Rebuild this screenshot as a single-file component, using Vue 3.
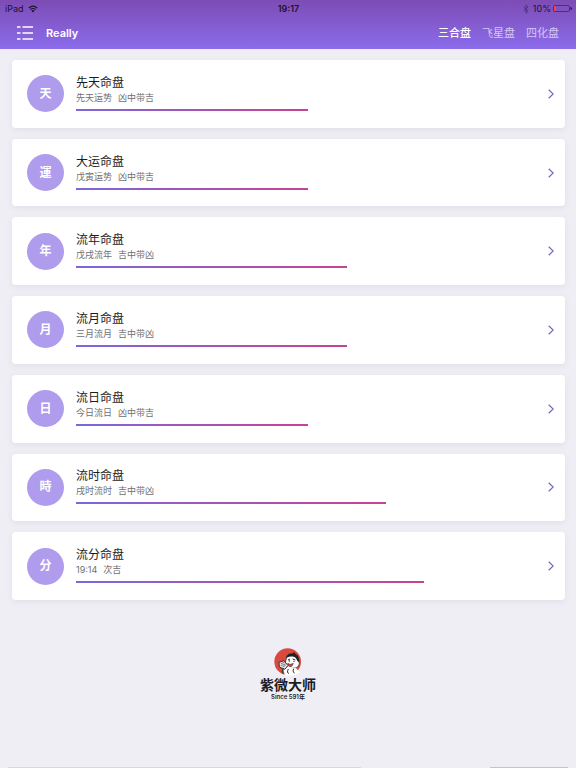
<script setup>
import { ref } from 'vue'

const tabs = ['三合盘', '飞星盘', '四化盘']
const active = ref('三合盘')
const charts = [
  { mark: '天', title: '先天命盘', period: '先天运势', luck: '凶中带吉', score: 60 },
  { mark: '運', title: '大运命盘', period: '戊寅运势', luck: '凶中带吉', score: 60 },
  { mark: '年', title: '流年命盘', period: '戊戌流年', luck: '吉中带凶', score: 70 },
  { mark: '月', title: '流月命盘', period: '三月流月', luck: '吉中带凶', score: 70 },
  { mark: '日', title: '流日命盘', period: '今日流日', luck: '凶中带吉', score: 60 },
  { mark: '時', title: '流时命盘', period: '戌时流时', luck: '吉中带凶', score: 80 },
  { mark: '分', title: '流分命盘', period: '19:14', luck: '次吉', score: 90 }
]
</script>

<template>
  <div class="page">
    <header class="top">
      <div class="status">
        <div class="status-left">
          <span>iPad</span>
          <svg class="wifi" viewBox="0 0 20 16" aria-hidden="true">
            <path d="M1.5 6Q10-1.4 18.5 6M4.6 9.4Q10 4.6 15.4 9.4" fill="none" stroke="#1d1333" stroke-width="2.2" />
            <path d="M6.8 11.6Q10 8.8 13.2 11.6L10 15Z" fill="#1d1333" />
          </svg>
        </div>
        <span class="clock">19:17</span>
        <div class="status-right">
          <svg class="bluetooth" viewBox="0 0 10 16" aria-hidden="true">
            <path d="M1 4.5L8.5 11.5L5 15V1L8.5 4.5L1 11.5" fill="none" stroke="#4a2f80" stroke-width="1.5" />
          </svg>
          <span>10%</span>
          <svg class="battery" viewBox="0 0 19 9" aria-hidden="true">
            <rect x="0.5" y="1.5" width="16" height="6" rx="1.5" fill="none" stroke="#4a2f80" />
            <rect x="1" y="2" width="2" height="5" fill="#f0434b" />
            <path d="M17.5 3Q19 3.2 19 4.5T17.5 6Z" fill="#1d1333" />
          </svg>
        </div>
      </div>
      <div class="bar">
        <button class="menu" type="button" aria-label="菜单">
          <svg viewBox="0 0 16 14" aria-hidden="true">
            <path d="M0 1H3.5M5.5 1H16M0 7H3.5M5.5 7H16M0 13H3.5M5.5 13H16" stroke="#fff" stroke-width="1.3" />
          </svg>
        </button>
        <h1>Really</h1>
        <nav>
          <button
            v-for="tab in tabs"
            :key="tab"
            type="button"
            class="tab"
            :class="{ active: tab === active }"
            @click="active = tab"
          >{{ tab }}</button>
        </nav>
      </div>
    </header>

    <main>
      <div class="list">
        <a v-for="c in charts" :key="c.title" class="card" href="#">
          <span class="mark">{{ c.mark }}</span>
          <div class="body">
            <h2>{{ c.title }}</h2>
            <p><span>{{ c.period }}</span><span>{{ c.luck }}</span></p>
            <div class="track"><div class="fill" :style="{ width: c.score + '%' }"></div></div>
          </div>
          <svg class="chevron" viewBox="0 0 6 10" aria-hidden="true">
            <path d="M0.7 0.7L5.2 5L0.7 9.3" fill="none" stroke="#7767bd" stroke-width="1.2" />
          </svg>
        </a>
      </div>
    </main>

    <footer class="brand">
      <svg class="portrait" viewBox="0 0 84 84" aria-hidden="true">
        <circle cx="41" cy="41" r="40" fill="#d8493f" />
        <path d="M37 32C37 18 51 13 63 20C70 25 72 36 76 45C75 56 68 61 58 60C45 62 34 55 34 44Z" fill="#fff" stroke="#222" stroke-width="2" />
        <path d="M36 31C37 20 46 15 55 17C56 11 65 13 64 18C73 20 76 32 76 42L70 39C68 33 65 29 61 27C52 24 43 26 36 31Z" fill="#242124" />
        <path d="M42 36L48 33M56 33L64 36" stroke="#222" stroke-width="3" />
        <circle cx="46" cy="39" r="2" fill="#222" />
        <circle cx="60" cy="40" r="2" fill="#222" />
        <path d="M41 46Q49 52 58 46Q55 57 48 56Q41 55 41 46Z" fill="#d8493f" stroke="#222" stroke-width="1.5" />
        <path d="M28 61L43 56L67 61L77 74Q57 87 32 82Z" fill="#fff" />
        <path d="M15 43L30 38L42 53L32 64L16 57Z" fill="#e8e5e5" stroke="#333" stroke-width="3" />
        <path d="M21 47L32 43M20 53L34 48M26 57L35 52" stroke="#444" stroke-width="2" />
        <path d="M29 61Q20 69 28 78M43 63Q37 76 45 76M59 62Q54 69 61 76" fill="none" stroke="#333" stroke-width="3" />
      </svg>
      <strong>紫微大师</strong>
      <small>Since 591年</small>
    </footer>
    <div class="edge"></div>
  </div>
</template>

<style>
body {
  margin: 0;
  background: #efeef5;
}
</style>

<style scoped>
.page {
  box-sizing: border-box;
  min-height: 100vh;
  display: flex;
  flex-direction: column;
  background: #efeef5;
  color: #1c1c1e;
  font-family: Inter, "Noto Sans CJK SC", sans-serif;
}
button {
  padding: 0;
  border: 0;
  background: none;
  font: inherit;
  color: inherit;
}
svg {
  display: block;
}
.top {
  background: linear-gradient(#7d4cb4, #8b6ceb);
}
.status {
  display: grid;
  grid-template-columns: 1fr auto 1fr;
  align-items: center;
  height: 17px;
  padding: 0 4px 0 5px;
  font-size: 9px;
  color: #1d1333;
}
.status-left,
.status-right {
  display: flex;
  align-items: center;
  gap: 4px;
}
.status-right {
  justify-content: flex-end;
  gap: 2px;
}
.clock {
  font-weight: 600;
}
.wifi {
  width: 10px;
  height: 8px;
}
.bluetooth {
  width: 6px;
  height: 10px;
  margin-right: 2px;
}
.battery {
  width: 19px;
  height: 9px;
}
.bar {
  display: flex;
  align-items: center;
  height: 32px;
  padding: 0 17px;
  color: #fff;
}
.menu svg {
  width: 16px;
  height: 14px;
}
h1 {
  flex: 1;
  margin: 0 0 0 13px;
  font-size: 11px;
  line-height: 16px;
  font-weight: 600;
}
nav {
  display: flex;
  gap: 11px;
}
.tab {
  font-size: 11px;
  line-height: 16px;
  color: #d6c6f6;
}
.tab.active {
  color: #fff;
  font-weight: 500;
}
.list {
  display: grid;
  grid-auto-rows: 1fr;
  gap: 11px;
  min-height: 540px;
  padding: 11px 11px 0 12px;
}
.card {
  display: flex;
  align-items: center;
  padding: 0 11px 0 15px;
  border-radius: 4px;
  background: #fff;
  box-shadow: 0 2px 6px #e0dfe8;
  color: inherit;
  text-decoration: none;
}
.mark {
  display: grid;
  place-items: center;
  width: 37px;
  height: 37px;
  border-radius: 50%;
  background: #af9ced;
  color: #fff;
  font-size: 12px;
  line-height: 16px;
  font-weight: 700;
}
.body {
  flex: 1;
  margin-left: 12px;
  padding-bottom: 2px;
}
h2 {
  margin: 0;
  font-size: 12px;
  font-weight: 400;
  line-height: 16px;
}
p {
  display: flex;
  gap: 6px;
  margin: 0;
  font-size: 9px;
  line-height: 14px;
  color: #6f6f73;
}
.track {
  width: 82%;
  margin-top: 4px;
}
.fill {
  height: 2px;
  background: linear-gradient(90deg, #7c67dc, #c94292);
}
.chevron {
  width: 6px;
  height: 10px;
}
.brand {
  display: flex;
  flex-direction: column;
  align-items: center;
  margin-top: 48px;
}
.portrait {
  width: 28px;
  height: 28px;
}
.brand strong {
  font-size: 14px;
  font-weight: 700;
  line-height: 18px;
}
.brand small {
  font-size: 6px;
  font-weight: 600;
  line-height: 6px;
}
.edge {
  height: 1px;
  margin: auto 8px 0;
  background: linear-gradient(90deg, #eccfdf 63%, #efeef5 63% 86%, #e5b4cb 86%);
}
</style>
